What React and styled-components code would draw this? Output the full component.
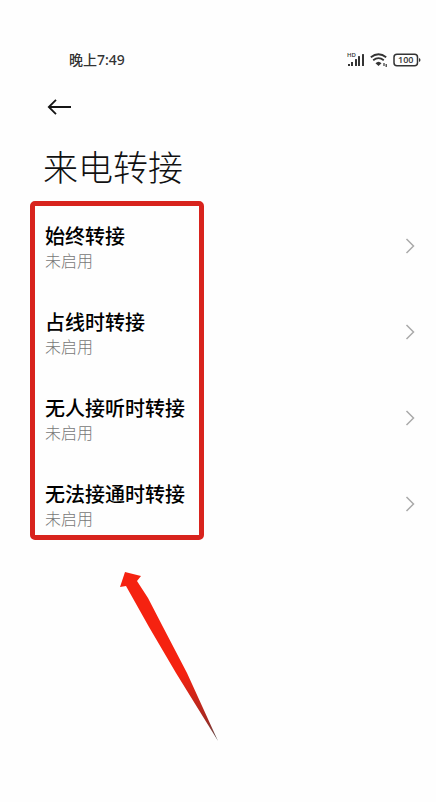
import React from "react";
import styled, { createGlobalStyle } from "styled-components";

const GlobalStyle = createGlobalStyle`
  *, *::before, *::after { box-sizing: border-box; }
  body {
    margin: 0;
    background: #fefefe;
    color: #111;
    font-family: "Noto Sans CJK SC", "Noto Sans", sans-serif;
  }
`;

const Screen = styled.main`
  min-height: 100vh;
  padding-top: 48px;
`;

const StatusBar = styled.header`
  display: flex;
  align-items: center;
  justify-content: space-between;
  height: 24px;
  padding: 0 15px 0 69px;
`;

const Clock = styled.time`
  font-family: "Noto Sans", "Noto Sans CJK SC", sans-serif;
  font-size: 14px;
  font-weight: 500;
  line-height: 24px;
  color: #333;
`;

const StatusIcons = styled.div`
  display: flex;
  align-items: center;
  gap: 5px;
  color: #333;

  svg { display: block; }
`;

const BatteryText = styled.text`
  font-family: "Open Sans", sans-serif;
  font-size: 9px;
  font-weight: 600;
`;

const HdText = styled.text`
  font-family: "Open Sans", sans-serif;
  font-size: 6px;
  font-weight: 600;
`;

const BackButton = styled.button`
  display: flex;
  align-items: center;
  height: 32px;
  margin: 19px 0 0 44px;
  padding: 0 3px;
  border: 0;
  background: none;
  color: #151515;
  cursor: pointer;
`;

const Title = styled.h1`
  margin: 17px 0 0 43px;
  font-size: 35px;
  font-weight: 300;
  line-height: 52px;
  color: #111;
`;

const ListArea = styled.section`
  position: relative;
  margin-top: 9px;
`;

const List = styled.ul`
  margin: 0;
  padding: 0;
  list-style: none;
`;

const RowButton = styled.button`
  display: flex;
  align-items: center;
  justify-content: space-between;
  width: 100%;
  padding: 23px 20px 15px 45px;
  border: 0;
  background: none;
  color: inherit;
  font-family: inherit;
  text-align: left;
  cursor: pointer;

  svg {
    flex: none;
    margin-bottom: 4px;
  }
`;

const RowText = styled.span`
  display: flex;
  flex-direction: column;
`;

const RowTitle = styled.span`
  font-size: 20px;
  font-weight: 500;
  line-height: 24px;
  color: #000;
`;

const RowStatus = styled.span`
  font-size: 16px;
  font-weight: 300;
  line-height: 24px;
  color: #777;
`;

const Highlight = styled.div`
  position: absolute;
  top: 0;
  bottom: 5px;
  left: 30px;
  width: 174px;
  border: 5px solid #d8231d;
  border-radius: 5px;
  pointer-events: none;
`;

const Pointer = styled.svg`
  display: block;
  margin: 27px 0 0 119px;
`;

const SignalIcon = () => (
  <svg width="18" height="16" viewBox="0 0 18 16" fill="currentColor" role="img" aria-label="HD">
    <HdText x="0" y="5">HD</HdText>
    <rect x="1" y="12" width="2" height="2" />
    <rect x="4" y="10" width="2" height="4" />
    <rect x="8" y="7" width="2" height="7" rx="0.5" />
    <rect x="11" y="4" width="2" height="10" rx="0.5" />
    <rect x="15" y="2" width="2" height="12" rx="0.5" />
  </svg>
);

const WifiIcon = () => (
  <svg width="18" height="16" viewBox="0 0 18 16" fill="none" stroke="currentColor" aria-hidden="true">
    <path d="M.8 5.2Q8.5-.8 16.2 5.2M3.2 8.3Q8.5 4 13.8 8.3" strokeWidth="1.8" />
    <path d="M5.5 11.2Q8.5 8.2 11.5 11.2L8.5 14Z" fill="currentColor" stroke="none" />
    <path d="M14 11v3M16.2 12v3" strokeWidth="1.2" />
  </svg>
);

const BatteryIcon = () => (
  <svg width="28" height="14" viewBox="0 0 28 14" role="img" aria-label="100">
    <rect x="1" y="1.2" width="23.5" height="11.6" rx="3" fill="none" stroke="currentColor" strokeWidth="1.5" />
    <path d="M26 5v4q1.5-.5 1.5-2T26 5Z" fill="currentColor" />
    <BatteryText x="12.8" y="10.3" textAnchor="middle" fill="currentColor">100</BatteryText>
  </svg>
);

const Chevron = () => (
  <svg width="12" height="18" viewBox="0 0 12 18" fill="none" stroke="#aaa" strokeWidth="1.5" aria-hidden="true">
    <path d="M2.5 2 9.5 9l-7 7" />
  </svg>
);

const options = ["始终转接", "占线时转接", "无人接听时转接", "无法接通时转接"];

export default function App() {
  return (
    <Screen>
      <GlobalStyle />
      <StatusBar>
        <Clock dateTime="19:49">晚上7:49</Clock>
        <StatusIcons>
          <SignalIcon />
          <WifiIcon />
          <BatteryIcon />
        </StatusIcons>
      </StatusBar>
      <BackButton type="button" aria-label="返回">
        <svg width="25" height="18" viewBox="0 0 25 18" fill="none" stroke="currentColor" strokeWidth="1.8">
          <path d="M24 9H2M9 1.8 1.8 9 9 16.2" />
        </svg>
      </BackButton>
      <Title>来电转接</Title>
      <ListArea>
        <List>
          {options.map((name) => (
            <li key={name}>
              <RowButton type="button">
                <RowText>
                  <RowTitle>{name}</RowTitle>
                  <RowStatus>未启用</RowStatus>
                </RowText>
                <Chevron />
              </RowButton>
            </li>
          ))}
        </List>
        <Highlight />
      </ListArea>
      <Pointer width="100" height="170" viewBox="0 0 100 170" aria-hidden="true">
        <defs>
          <linearGradient id="pointer-fill" x1="0" y1="0" x2="0" y2="1">
            <stop offset="0.6" stopColor="#f52210" />
            <stop offset="0.88" stopColor="#a52a22" />
            <stop offset="1" stopColor="#555" />
          </linearGradient>
        </defs>
        <path d="M6 0 22 4 18 9 29 26 44 55 68 101 99 169 57 101 30 55 7 14 1 15Z" fill="url(#pointer-fill)" />
      </Pointer>
    </Screen>
  );
}
